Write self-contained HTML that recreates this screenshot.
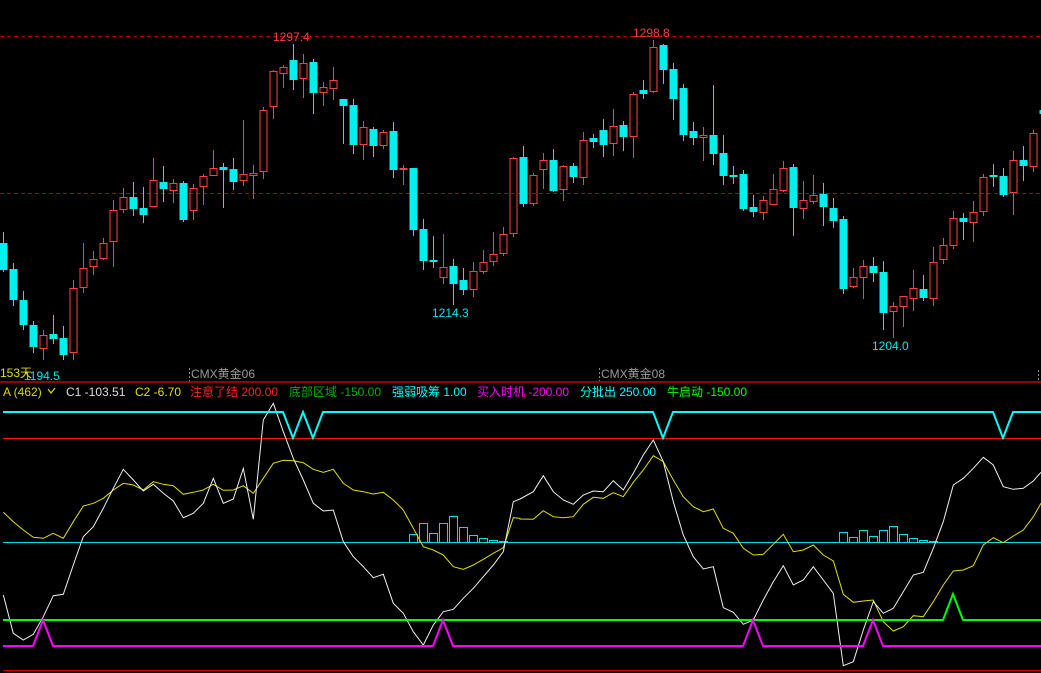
<!DOCTYPE html>
<html><head><meta charset="utf-8"><style>
html,body{margin:0;padding:0;background:#000;width:1041px;height:673px;overflow:hidden}
svg{display:block}
text{font-family:"Liberation Sans","Noto Sans CJK SC",sans-serif;font-size:12px}
</style></head><body>
<svg id="s" width="1041" height="673" viewBox="0 0 1041 673" xmlns="http://www.w3.org/2000/svg">
<rect width="1041" height="673" fill="#000"/>
<line x1="0" y1="36.5" x2="1041" y2="36.5" stroke="#b00000" stroke-dasharray="4,3"/>
<line x1="0" y1="193.5" x2="1041" y2="193.5" stroke="#b00000" stroke-dasharray="4,3"/>
<g id="c"></g>
<text x="273" y="41" fill="#ff3c3c" font-size="13">1297.4</text>
<text x="633" y="37" fill="#ff3c3c" font-size="13">1298.8</text>
<text x="432" y="317" fill="#00e8e8" font-size="13">1214.3</text>
<text x="872" y="350" fill="#00e8e8" font-size="13">1204.0</text>
<text x="24" y="380" fill="#00e8e8" font-size="13">1194.5</text>
<text x="0" y="377" fill="#e0e000" font-size="12">153天</text>
<line x1="189.5" y1="368" x2="189.5" y2="381" stroke="#888" stroke-dasharray="2,2"/>
<text x="191" y="378" fill="#999" font-size="11">CMX黄金06</text>
<line x1="599.5" y1="368" x2="599.5" y2="381" stroke="#888" stroke-dasharray="2,2"/>
<text x="601" y="378" fill="#999" font-size="11">CMX黄金08</text>
<line x1="1038.5" y1="370" x2="1038.5" y2="381" stroke="#888" stroke-dasharray="2,2"/>
<line x1="0" y1="382" x2="1041" y2="382" stroke="#c00000" stroke-width="1.5"/>
<text y="396"><tspan x="3" fill="#d8d800">A (462)</tspan><tspan x="66" fill="#ddd">C1 -103.51</tspan><tspan x="135" fill="#e0e000">C2 -6.70</tspan><tspan x="190" fill="#ff2020">注意了结 200.00</tspan><tspan x="289" fill="#00b000">底部区域 -150.00</tspan><tspan x="392" fill="#00ffff">强弱吸筹 1.00</tspan><tspan x="477" fill="#ff00ff">买入时机 -200.00</tspan><tspan x="580" fill="#00ffff">分批出 250.00</tspan><tspan x="667" fill="#00ff00">牛启动 -150.00</tspan></text>
<polyline points="48,389 51,393 55,388" fill="none" stroke="#d8d800" stroke-width="1.3"/>
<line x1="3" y1="438.5" x2="1041" y2="438.5" stroke="#ff1010"/>
<line x1="3" y1="542.5" x2="1041" y2="542.5" stroke="#00e0e0"/>
<line x1="3" y1="670.5" x2="1041" y2="670.5" stroke="#c00000"/>
<g id="l"></g>
<polyline points="3,412 283,412 293,438 303,412 313,438 323,412 653,412 663,438 673,412 993,412 1003,438 1013,412 1041,412" fill="none" stroke="#00ffff" stroke-width="2"/>
<polyline points="3,620 943,620 953,594 963,620 1041,620" fill="none" stroke="#00ff00" stroke-width="2"/>
<polyline points="3,646 33,646 43,620 53,646 433,646 443,620 453,646 743,646 753,620 763,646 863,646 873,620 883,646 1041,646" fill="none" stroke="#ff00ff" stroke-width="2"/>
</svg>
<script>
var NS="http://www.w3.org/2000/svg";
var d=[[232,243,270,272,0],[263,269,300,306,0],[291,300,325,330,0],[321,325,347,353,0],[330,335,349,360,1],[315,334,339,344,0],[326,338,355,360,0],[280,288,353,360,1],[243,268,288,293,1],[251,259,267,275,1],[238,243,259,260,1],[200,210,242,267,1],[188,197,210,213,1],[182,197,209,216,0],[187,208,215,223,0],[158,180,207,207,1],[166,182,189,202,0],[179,183,191,203,1],[181,183,220,222,0],[184,188,211,220,1],[174,176,187,205,1],[150,168,176,176,1],[163,167,170,208,0],[158,169,182,190,0],[120,174,181,186,1],[165,173,176,199,1],[107,110,172,179,1],[70,71,107,119,1],[65,67,74,88,1],[44,60,80,90,0],[54,63,79,98,1],[59,62,93,114,0],[82,87,93,106,1],[67,80,89,100,1],[99,99,106,144,0],
[99,105,145,154,0],[121,127,145,160,1],[127,129,146,157,0],[130,132,146,149,1],[122,131,170,178,0],[165,168,170,185,1],[168,168,230,236,0],[219,229,261,270,0],[236,260,262,268,0],[234,267,278,284,1],[259,266,284,305,0],[268,280,290,295,0],[262,271,290,297,1],[250,262,272,274,1],[232,254,262,266,1],[227,234,254,256,1],[157,158,234,237,1],[146,157,204,207,0],[173,175,204,206,1],[153,160,170,189,1],[149,160,191,192,0],[165,166,190,201,1],[163,166,177,183,0],[132,140,178,185,1],[134,138,142,148,0],[119,130,145,157,0],[109,126,144,156,1],[121,125,137,151,0],[92,94,137,158,1],[80,90,94,99,0],[40,47,92,93,1],[44,45,70,84,0],[63,69,99,120,0],[84,88,135,141,0],
[122,131,138,145,0],[127,135,138,161,1],[85,135,154,165,0],[135,153,176,185,0],[166,175,177,184,0],[170,174,209,211,0],[195,207,212,217,0],[196,200,213,220,1],[174,189,205,205,1],[161,168,191,192,1],[164,167,208,236,0],[181,200,209,219,1],[175,195,202,204,1],[183,194,207,226,0],[198,208,221,228,0],[216,219,289,294,0],[268,277,287,288,1],[260,266,278,299,1],[257,266,273,282,0],[261,272,313,330,0],[302,306,312,338,1],[296,296,307,327,1],[270,288,299,311,1],[275,289,298,301,0],[247,262,299,306,1],[238,245,260,264,1],[211,218,246,249,1],[213,218,222,240,0],[201,212,223,242,1],[174,177,212,216,1],[164,175,177,187,0],[168,176,195,197,0],[151,160,193,215,1],[146,160,166,181,0],[130,133,167,172,1],[105,110,114,120,0]];
var g=document.getElementById("c"),h="";
d.forEach(function(c,i){var x=3.5+10*i;
if(c[4]){h+='<line x1="'+x+'" y1="'+c[0]+'" x2="'+x+'" y2="'+c[1]+'" stroke="#ff4040"/><line x1="'+x+'" y1="'+c[2]+'" x2="'+x+'" y2="'+c[3]+'" stroke="#ff4040"/><rect x="'+(x-3.5)+'" y="'+(c[1]+0.5)+'" width="7" height="'+Math.max(1,c[2]-c[1]-1)+'" fill="none" stroke="#ff4040"/>';}
else{h+='<line x1="'+x+'" y1="'+c[0]+'" x2="'+x+'" y2="'+c[3]+'" stroke="#00f0f0"/><rect x="'+(x-4)+'" y="'+c[1]+'" width="8" height="'+Math.max(2,c[2]-c[1])+'" fill="#00f0f0"/>';}
});
g.innerHTML=h;
function pts(a,ox){return a.map(function(p){return (p[0]/3+ox).toFixed(1)+","+(p[1]/3+395).toFixed(1)}).join(" ")}
var w1=[[10,600],[40,715],[70,735],[100,718],[130,665],[160,602],[190,598],[220,510],[250,425],[280,395],[310,340],[340,280],[370,223],[400,255],[430,288],[460,268],[490,295],[520,318],[550,368],[580,355],[610,325],[640,250],[670,325],[700,312],[730,220],[760,373],[790,75],[820,25],[850,110],[880,190],[910,255],[940,325],[970,348],[1000,345],[1030,440],[1060,485],[1090,515],[1120,548],[1150,538],[1180,625],[1210,655],[1240,710],[1270,750],[1300,690],[1330,650],[1360,643],[1390,610],[1420,580],[1450,545],[1480,510],[1510,470],[1540,320],[1560,312]];
var y1=[[10,352],[40,380],[70,405],[100,427],[130,430],[160,415],[190,430],[220,380],[250,333],[280,325],[310,310],[340,285],[370,265],[400,270],[430,285],[460,260],[490,268],[520,272],[550,298],[580,292],[610,285],[640,268],[670,286],[700,285],[730,272],[760,295],[790,250],[820,205],[850,196],[880,197],[910,203],[940,223],[970,232],[1000,223],[1030,265],[1060,285],[1090,290],[1120,297],[1150,292],[1180,315],[1210,345],[1240,400],[1270,455],[1300,465],[1330,480],[1360,515],[1390,523],[1420,510],[1450,493],[1480,475],[1510,458],[1540,368],[1560,370]];
var w2=[[0,312],[40,290],[70,242],[100,290],[130,315],[160,328],[190,300],[220,288],[250,290],[280,257],[310,285],[340,235],[370,180],[400,135],[430,200],[460,320],[490,420],[520,485],[550,522],[580,515],[610,638],[640,652],[670,688],[700,675],[730,615],[760,560],[790,512],[820,570],[850,555],[880,515],[910,555],[940,595],[970,812],[1000,800],[1030,705],[1060,620],[1090,655],[1120,640],[1150,590],[1180,540],[1210,532],[1240,460],[1270,380],[1300,270],[1330,250],[1360,220],[1390,187],[1420,210],[1450,275],[1480,283],[1510,280],[1540,258],[1563,232]];
var y2=[[0,372],[40,373],[70,347],[100,365],[130,368],[160,365],[190,328],[220,307],[250,310],[280,293],[310,305],[340,262],[370,225],[400,182],[430,200],[460,255],[490,305],[520,335],[550,350],[580,342],[610,400],[640,415],[670,460],[700,480],[730,478],[760,448],[790,418],[820,470],[850,465],[880,450],[910,480],[940,498],[970,598],[1000,622],[1030,618],[1060,615],[1090,680],[1120,708],[1150,695],[1180,662],[1210,665],[1240,620],[1270,570],[1300,528],[1330,525],[1360,512],[1390,450],[1420,428],[1450,443],[1480,423],[1510,405],[1540,365],[1563,325]];
var L="";
var b1=[534,523,533,523,516,527,535,538,540,541],b2=[532,537,530,536,530,526,534,538,540,541];
b1.forEach(function(t,i){L+='<rect x="'+(409.5+10*i)+'" y="'+(t+0.5)+'" width="8" height="'+(542-t)+'" fill="none" stroke="#00e0e0"/>'});
b2.forEach(function(t,i){L+='<rect x="'+(839.5+10*i)+'" y="'+(t+0.5)+'" width="8" height="'+(542-t)+'" fill="none" stroke="#00e0e0"/>'});
L+='<polyline points="'+pts(y1,0)+' '+pts(y2,520)+'" fill="none" stroke="#e0e000" stroke-width="1"/>';
L+='<polyline points="'+pts(w1,0)+' '+pts(w2,520)+'" fill="none" stroke="#f0f0f0" stroke-width="1"/>';
document.getElementById("l").innerHTML=L;
</script>
</body></html>
